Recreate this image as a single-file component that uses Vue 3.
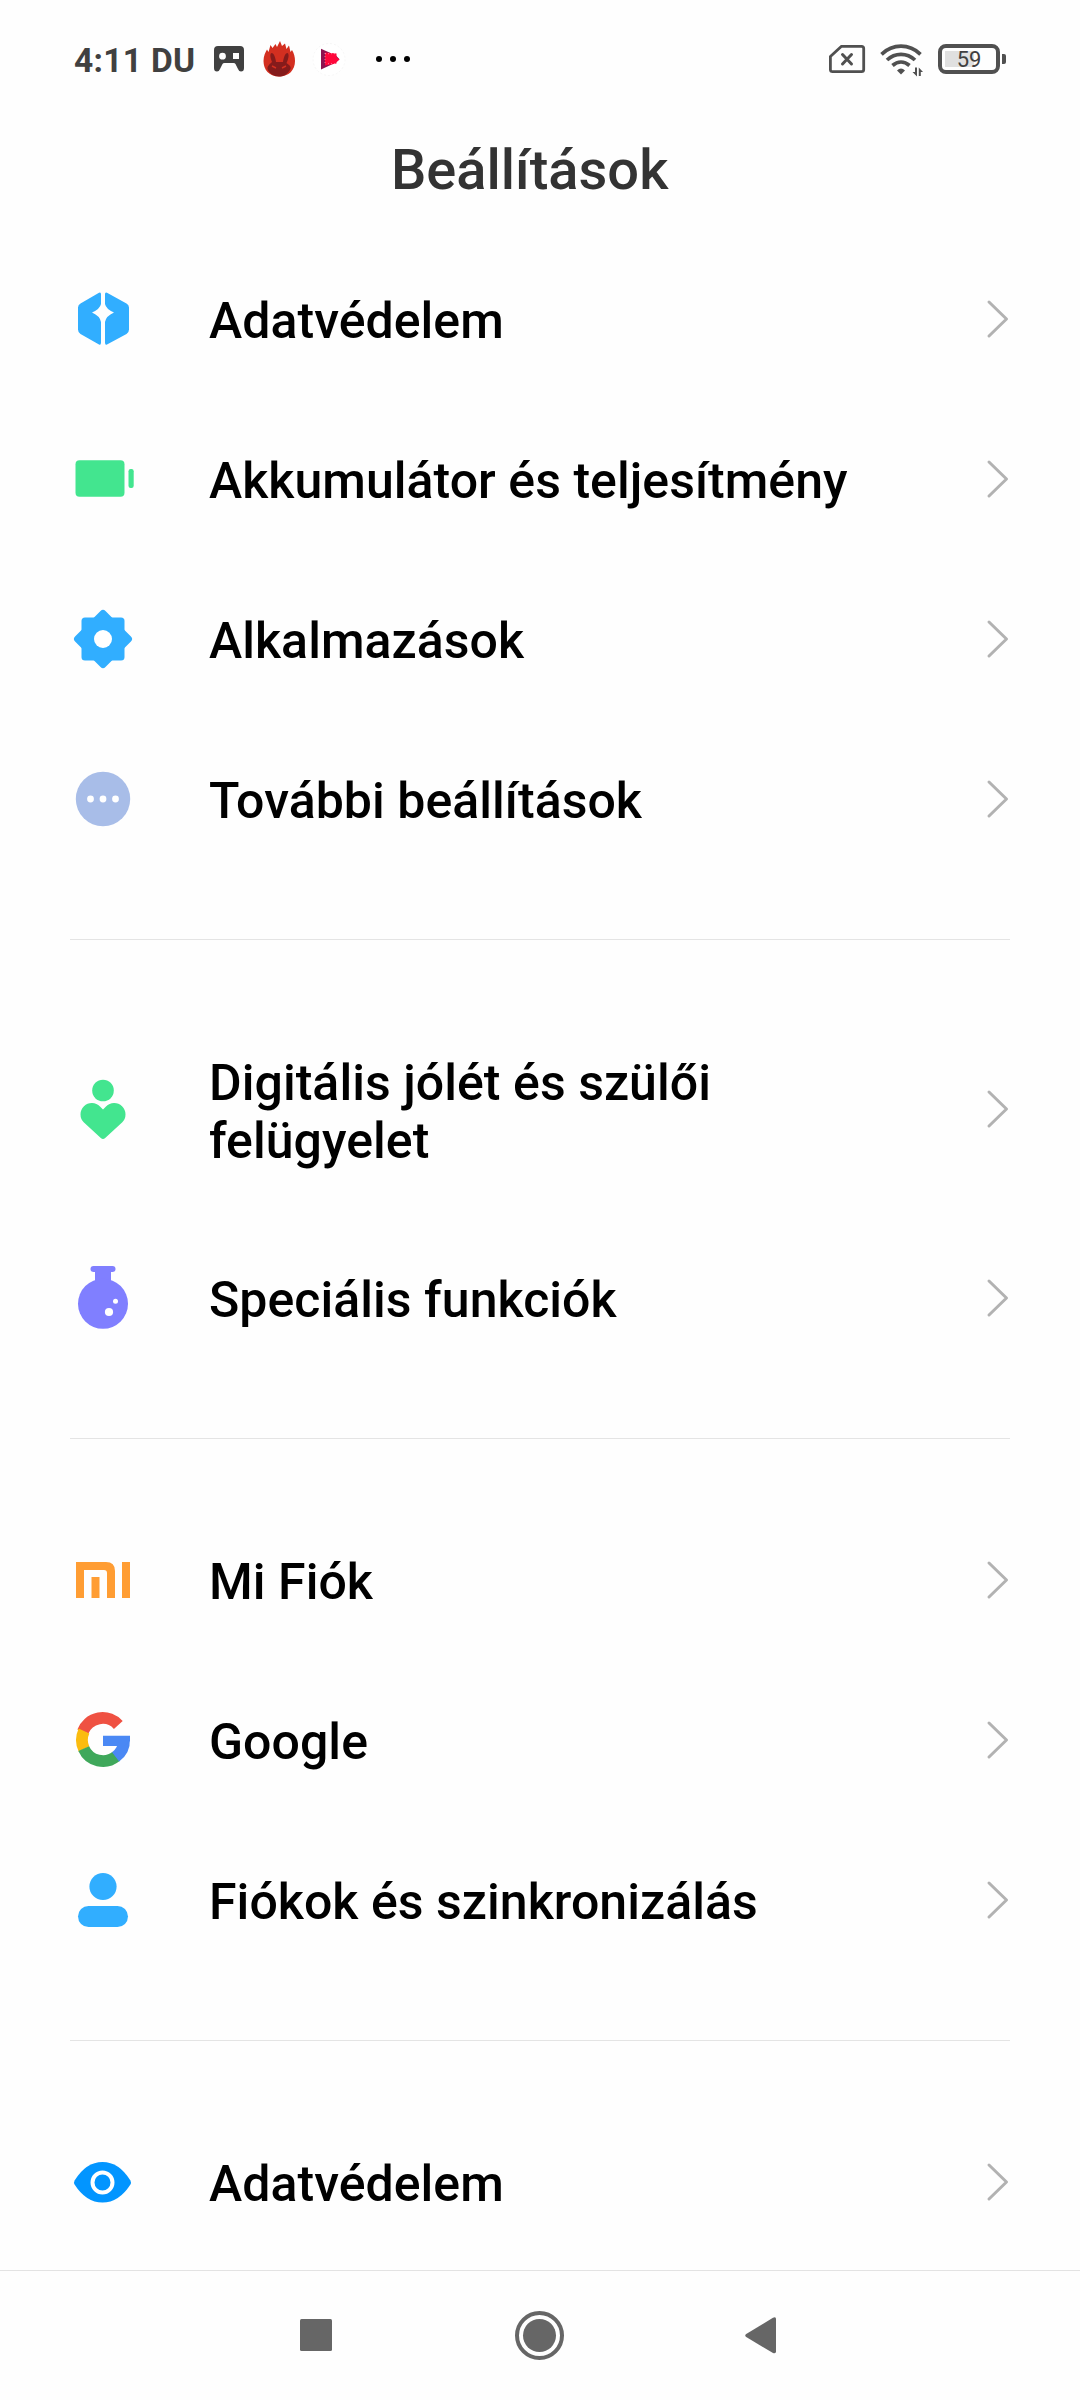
<script setup>
const groups = [
  [
    { icon: 'shield', label: 'Adatvédelem' },
    { icon: 'battery', label: 'Akkumulátor és teljesítmény' },
    { icon: 'gear', label: 'Alkalmazások' },
    { icon: 'more', label: 'További beállítások' },
  ],
  [
    { icon: 'heart', label: 'Digitális jólét és szülői felügyelet', tall: true },
    { icon: 'flask', label: 'Speciális funkciók' },
  ],
  [
    { icon: 'mi', label: 'Mi Fiók' },
    { icon: 'google', label: 'Google' },
    { icon: 'person', label: 'Fiókok és szinkronizálás' },
  ],
  [{ icon: 'eye', label: 'Adatvédelem' }],
]
</script>

<template>
  <div class="screen">
    <header class="status">
      <span class="clock">4:11 DU</span>
      <svg class="notifications" width="204" height="60" viewBox="0 0 204 60">
        <path fill="#404040" fill-rule="evenodd" d="M8 16H30Q34 16 34 20V38Q34 41.500 31 41.500Q29 41.500 28 39L25.500 34Q25 33 23.500 33H14.500Q13 33 12.500 34L10 39Q9 41.500 7 41.500Q4 41.500 4 38V20Q4 16 8 16ZM12.500 22.800A3.400 3.400 0 1 0 12.500 29.600A3.400 3.400 0 1 0 12.500 22.800ZM23 23V29H29V23Z" />
        <path fill="#d32f20" d="M69 46.500C59 46.500 53.500 39.500 53.500 31C53.500 26 55.500 22 57 19.500L58.500 22L60.500 15L62.500 18L65.500 14L67 17L70 11L72 16L75 13.500L76.500 19L79 15.500L80.500 22L82 20C84 23 85 27 85 31C85 40 79 46.500 69 46.500Z" />
        <path fill="#851b1b" d="M62 32C60.500 28 59.500 24 61.500 23C64 23 65.500 28 66 32H73C73.500 28 75 23 77.500 23C79.500 24 78.500 29 76.500 33C79 35 81.500 36.500 80.500 39C78 44 74 46.500 69 46.500C64 46.500 59 43.500 57.500 39C57 36 60 34 62 32Z" />
        <path fill="none" stroke="#d32f20" stroke-width="1.500" d="M62 36L66 38M76 36L72 38" />
        <circle cx="119" cy="29.500" r="16" fill="#fff" stroke="#f0f0f0" stroke-width=".6" stroke-dasharray="2 2" />
        <path fill="#8e1250" d="M111 18.700L126 25.500L129.500 29.300L126 32.500L111 39.500Z" />
        <path fill="#ff073b" d="M115 22.500L126.500 23.500V27L129.500 29.500L126.500 32V33.500L115 35.500Z" />
        <path fill="none" stroke="#ffc0cf" stroke-width=".6" stroke-dasharray="1 2" d="M115 23V35M115 23.700H126M118 33.700H126" />
        <g fill="#000"><circle cx="169" cy="29" r="3" /><circle cx="183" cy="29" r="3" /><circle cx="197" cy="29" r="3" /></g>
      </svg>
      <svg class="signals" width="110" height="60" viewBox="0 0 110 60">
        <g fill="none" stroke="#505050">
          <path stroke-width="2.800" stroke-linejoin="round" d="M11.500 16.300H31.500Q33.700 16.300 33.700 18.500V39.500Q33.700 41.700 31.500 41.700H2.700Q.4 41.700 .4 39.500V26.500Z" />
          <path stroke-width="3" stroke-linecap="round" d="M12.500 24.500L21.500 34M21.500 24.500L12.500 34" />
          <path stroke-width="3.700" d="M51.500 24.300Q60 16.200 71 16.200T90.500 24.300" />
          <path stroke-width="3.700" d="M57 30Q63 24.300 71 24.300T85 30" />
          <path stroke-width="3.700" d="M62.500 35.500Q66.500 32 71 32T79.500 35.500" />
        </g>
        <path fill="#505050" d="M67 40.500Q71 36.500 75 40.500L71 44.500ZM85 37.500H87V46.500L82.500 42H85ZM88.800 46V37.500L93 42H90.800V46Z" />
      </svg>
      <div class="power"><span>59</span></div>
    </header>

    <h1 class="title">Beállítások</h1>

    <main class="list">
      <section v-for="(group, g) in groups" :key="g" class="group">
        <div v-for="item in group" :key="item.icon" class="row" :class="{ tall: item.tall }">
          <svg class="icon" width="66" height="66" viewBox="0 0 66 66">
            <g v-if="item.icon === 'shield'" fill="#31aeff">
              <path d="M29 6.700Q31 5.700 31 8.200V18Q30 23 22 26.500Q30 30 31 36V56.500Q31 59.500 29 58.500L10.500 48Q8 46.500 8 43.500V21.500Q8 19 10.500 17.500Z" />
              <path d="M37 6.700Q35 5.700 35 8.200V18Q36 23 44 26.500Q36 30 35 36V56.500Q35 59.500 37 58.500L56.500 48Q59 46.500 59 43.500V21.500Q59 19 56.500 17.500Z" />
            </g>
            <g v-else-if="item.icon === 'battery'" fill="#43e58f">
              <rect x="5.500" y="14.200" width="49" height="36.500" rx="4" />
              <rect x="58.500" y="23" width="5.200" height="19" rx="2.200" />
            </g>
            <g v-else-if="item.icon === 'gear'">
              <g fill="#31aeff"><rect x="11.500" y="11.500" width="43" height="43" rx="3.500" /><rect x="11.500" y="11.500" width="43" height="43" rx="3.500" transform="rotate(45 33 33)" /></g>
              <circle cx="33" cy="33" r="9" fill="#fff" />
            </g>
            <g v-else-if="item.icon === 'more'">
              <circle cx="33" cy="33" r="27.200" fill="#a8bde8" />
              <g fill="#fff"><circle cx="20.500" cy="33" r="3.400" /><circle cx="33" cy="33" r="3.400" /><circle cx="45.500" cy="33" r="3.400" /></g>
            </g>
            <g v-else-if="item.icon === 'heart'" fill="#43e58f">
              <circle cx="33" cy="14.500" r="10.800" />
              <path d="M33 33.500L36 30.500A11.300 11.300 0 0 1 52.300 46.300L35.200 62Q33 64 30.800 62L13.700 46.300A11.300 11.300 0 0 1 30 30.500Z" />
            </g>
            <g v-else-if="item.icon === 'flask'">
              <g fill="#807fff"><rect x="20.500" y="1" width="25" height="6" rx="3" /><path d="M25 4H41V18H25Z" /><circle cx="33" cy="38.800" r="25" /></g>
              <circle cx="39" cy="47" r="4.100" fill="#fff" /><circle cx="45.500" cy="36.300" r="2.500" fill="#fff" />
            </g>
            <g v-else-if="item.icon === 'mi'" fill="#ff9d33">
              <path d="M6 15H36Q45 15 45 24V51H37V26Q37 23 34 23H14V51H6Z" /><path d="M21.500 30H29.500V51H21.500ZM52 15H60V51H52Z" />
            </g>
            <g v-else-if="item.icon === 'google'" fill="none" stroke-width="11.800">
              <path stroke="#ef5142" d="M12.900 24.500A21.100 21.100 0 0 1 48.300 18" />
              <path stroke="#fbbc0f" d="M14 42A21.100 21.100 0 0 1 14 24" />
              <path stroke="#3fa85b" d="M46.300 49.300A21.100 21.100 0 0 1 13.700 41.600" />
              <path stroke="#4a88f4" d="M54 32A21.100 21.100 0 0 1 45.600 49.900" />
              <path fill="#4a88f4" stroke="none" d="M33 28.800H60V34L54 39H33Z" />
            </g>
            <g v-else-if="item.icon === 'person'" fill="#31aeff">
              <circle cx="33" cy="19.500" r="13.600" /><rect x="8" y="39" width="50" height="21" rx="10.500" />
            </g>
            <g v-else>
              <path fill="#0295ff" d="M4.600 31.500Q16 13 32.500 13T60.400 31.500Q61.500 33.500 60.400 35.500Q49 53.500 32.500 53.500T4.600 35.500Q3.500 33.500 4.600 31.500Z" />
              <circle cx="32.500" cy="33.500" r="10" fill="none" stroke="#fff" stroke-width="4" />
            </g>
          </svg>
          <span class="label">{{ item.label }}</span>
          <svg class="chevron" width="24" height="40" viewBox="0 0 24 40">
            <path d="M3 3L20.500 20L3 37" fill="none" stroke="#b2b2b2" stroke-width="3" stroke-linecap="round" stroke-linejoin="round" />
          </svg>
        </div>
      </section>
    </main>

    <nav class="navbar">
      <svg class="recents" width="32" height="32"><rect width="32" height="32" rx="1.500" fill="#666" /></svg>
      <svg class="home" width="49" height="49" viewBox="0 0 49 49"><circle cx="24.500" cy="24.500" r="22.500" fill="none" stroke="#666" stroke-width="4" /><circle cx="24.500" cy="24.500" r="16.500" fill="#666" /></svg>
      <svg width="32" height="37" viewBox="0 0 32 37"><path fill="#666" d="M28 .8Q31 -.5 31 2V34.500Q31 37 28 36L1.200 20Q-.8 18.500 1.200 17Z" /></svg>
    </nav>
  </div>
</template>

<style>
body { margin: 0; background: #fefefe; }
</style>

<style scoped>
.screen {
  width: 1080px;
  height: 2400px;
  display: flex;
  flex-direction: column;
  overflow: hidden;
  background: #fefefe;
  font-family: Roboto, "Noto Sans", sans-serif;
}
svg { display: block; flex: none; }
.status {
  box-sizing: border-box;
  height: 120px;
  padding: 30px 73px 0 74px;
  display: flex;
  align-items: flex-start;
  flex: none;
}
.clock {
  width: 136px;
  font-size: 33.500px;
  font-weight: 700;
  letter-spacing: 0.3px;
  line-height: 61px;
  color: #404040;
  white-space: nowrap;
}
.signals { margin: 0 -1px 0 auto; overflow: visible; }
.power {
  position: relative;
  box-sizing: border-box;
  width: 62px;
  height: 30px;
  margin: 14px 7px 0 -1px;
  border: 4px solid #505050;
  border-radius: 8px;
  background: linear-gradient(90deg, #e0e0e0 29px, transparent 29px) 3px 3px / 48px 16px no-repeat;
  color: #404040;
  font-size: 22px;
  line-height: 24px;
  text-align: center;
}
.power::after {
  content: "";
  position: absolute;
  right: -10px;
  top: 6px;
  width: 4px;
  height: 10px;
  border-radius: 0 2px 2px 0;
  background: #505050;
}
.title {
  height: 119px;
  margin: 0;
  padding-left: 391px;
  flex: none;
  font-size: 56px;
  font-weight: 500;
  line-height: 100px;
  color: #333;
}
.list { height: 2031px; flex: none; overflow: hidden; }
.group + .group { position: relative; padding-top: 61px; }
.group + .group + .group { padding-top: 62px; }
.group:not(:last-child) { padding-bottom: 60px; }
.group + .group::before {
  content: "";
  position: absolute;
  top: 0;
  left: 70px;
  right: 70px;
  height: 1px;
  background: #e4e4e4;
}
.row {
  box-sizing: border-box;
  height: 160px;
  padding: 0 70px;
  display: flex;
  align-items: center;
}
.row.tall { height: 218px; }
.label {
  flex: 1;
  margin: 3px 0 0 73px;
  font-size: 50px;
  font-weight: 500;
  line-height: 58px;
  letter-spacing: 0.05px;
  white-space: nowrap;
  color: #000;
}
.tall .label {
  margin-top: 5px;
  padding-right: 140px;
  white-space: normal;
}
.chevron { margin-left: 60px; }
.navbar {
  box-sizing: border-box;
  height: 130px;
  padding: 0 303px 0 300px;
  border-top: 1px solid #e3e3e3;
  display: flex;
  align-items: center;
  justify-content: space-between;
}
.recents { margin-top: -1px; }
.home { margin-left: 2px; }
</style>
